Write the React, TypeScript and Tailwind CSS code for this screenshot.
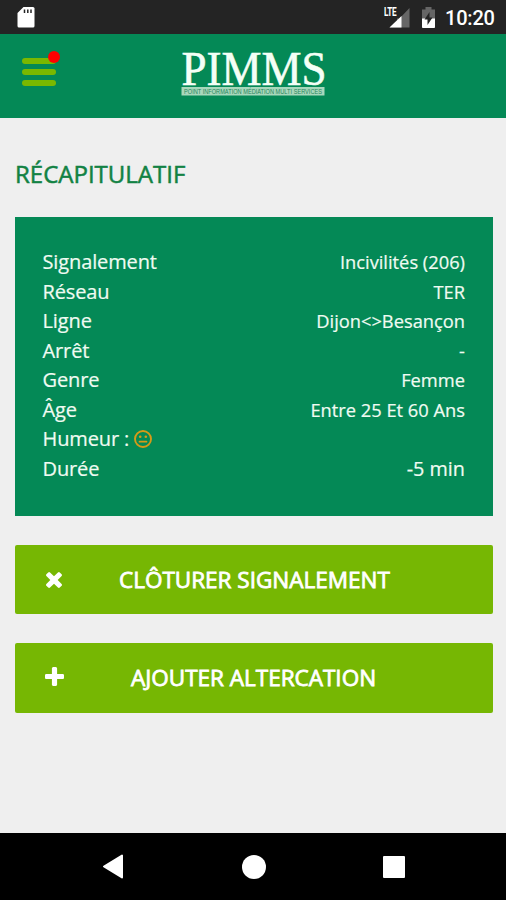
const rows = [
  { label: 'Signalement', value: 'Incivilités (206)' },
  { label: 'Réseau', value: 'TER' },
  { label: 'Ligne', value: 'Dijon<>Besançon' },
  { label: 'Arrêt', value: '-' },
  { label: 'Genre', value: 'Femme' },
  { label: 'Âge', value: 'Entre 25 Et 60 Ans' },
  { label: 'Humeur :', value: '', mood: true },
  { label: 'Durée', value: '-5 min', large: true },
];

function StatusBar() {
  return (
    <div className="flex h-[34px] items-start bg-[#242424] pr-[11px] pl-[17px] font-[Roboto,sans-serif] text-white">
      <svg className="mt-[7px] h-[21px] w-[18px]" viewBox="0 0 18 21">
        <path d="M6.500 0H16Q17.500 0 17.500 1.500V19Q17.500 20.500 16 20.500H2Q.5 20.500 .5 19V6Z" fill="#fff" />
        <path d="M7.500 2.500v3.500M10.800 2.500v3.500M14 2.500v3.500" stroke="#242424" strokeWidth="1.500" />
      </svg>
      <div className="ml-auto flex items-start">
        <span className="mt-[6px] -mr-[8px] block w-[13px] text-[12px] leading-[13px] font-bold tracking-[-0.4px]"><span className="block origin-left scale-x-[.68]">LTE</span></span>
        <svg className="mt-[8px] h-[20px] w-[21px]" viewBox="0 0 21 20">
          <path d="M20.500 0V19.500H.5L8 12.500V10.500H10.500Z" fill="#666" />
          <path d="M12.500 8V19.500H.5Z" fill="#fff" />
        </svg>
        <svg className="mt-[7px] ml-[12px] h-[21px] w-[13px]" viewBox="0 0 13 21">
          <path d="M3.500 0h6v2.500H13V20q0 1-1 1H1q-1 0-1-1V2.500h3.500Z" fill="#666" />
          <path d="M0 11.500h13V20q0 1-1 1H1q-1 0-1-1Z" fill="#fff" />
          <path d="M7.500 5 2.500 12.500h3V18L10.500 10.500h-3Z" fill="#242424" />
        </svg>
        <span className="ml-[10px] w-[50px] text-[20px] leading-[37px] font-medium tracking-[-0.2px]">10:20</span>
      </div>
    </div>
  );
}

function Header() {
  return (
    <header className="flex h-[84px] items-start bg-[#048956] pl-[21.5px]">
      <button aria-label="Menu" className="relative mt-[24px] flex w-[34px] flex-col gap-[5px]">
        <span className="h-[6px] rounded-full bg-[#7ab800]" />
        <span className="h-[6px] rounded-full bg-[#7ab800]" />
        <span className="h-[6px] rounded-full bg-[#7ab800]" />
        <span className="absolute -top-[7px] left-[26.5px] size-[12px] rounded-full bg-[#ff0000]" />
      </button>
      <svg className="ml-[114.5px] h-[84px] w-[168px]" viewBox="-10 -14 168 84">
        <text x="1.500" y="36.500" textLength="145" lengthAdjust="spacingAndGlyphs" fontFamily="'Liberation Serif', serif" fontSize="48" fill="#f4fff6" stroke="#f4fff6" strokeWidth=".6">PIMMS</text>
        <rect x="1.500" y="39" width="143" height="8.500" fill="#a8d8bc" />
        <text x="4" y="45.700" textLength="138" lengthAdjust="spacingAndGlyphs" fontFamily="'Liberation Sans', sans-serif" fontSize="6.500" fill="#26865b">POINT INFORMATION MÉDIATION MULTI SERVICES</text>
      </svg>
    </header>
  );
}

function MehIcon() {
  return (
    <svg className="ml-[5px] size-[18px]" viewBox="0 0 18 18" fill="none" stroke="#d69a18">
      <circle cx="9" cy="9" r="8" strokeWidth="1.900" />
      <path d="M5.500 11.700h7" strokeWidth="1.700" strokeLinecap="round" />
      <circle cx="6.200" cy="6.700" r="1.300" fill="#d69a18" stroke="none" />
      <circle cx="11.800" cy="6.700" r="1.300" fill="#d69a18" stroke="none" />
    </svg>
  );
}

const crossPath =
  'M1298 1322q0 40-28 68l-136 136q-28 28-68 28t-68-28l-294-294-294 294q-28 28-68 28t-68-28l-136-136q-28-28-28-68t28-68l294-294-294-294q-28-28-28-68t28-68l136-136q28-28 68-28t68 28l294 294 294-294q28-28 68-28t68 28l136 136q28 28 28 68t-28 68l-294 294 294 294q28 28 28 68z';
const plusPath =
  'M1408 800v192q0 40-28 68t-68 28H896v416q0 40-28 68t-68 28H608q-40 0-68-28t-28-68v-416H96q-40 0-68-28T0 992V800q0-40 28-68t68-28h416V288q0-40 28-68t68-28h192q40 0 68 28t28 68v416h416q40 0 68 28t28 68z';

export default function App() {
  return (
    <div className="flex h-[900px] w-[506px] flex-col overflow-hidden bg-[#efefef] font-['Open_Sans',sans-serif]">
      <StatusBar />
      <Header />
      <main className="flex-1 pr-[13px] pl-[15px]">
        <h1 className="mt-[40px] h-[32px] text-[24px] leading-[32px] whitespace-nowrap text-[#128243] [-webkit-text-stroke:0.5px_#128243]">RÉCAPITULATIF</h1>
        <section className="mt-[27px] h-[299px] bg-[#048956] px-[28px] pt-[30px] text-[#f0fbf2] [-webkit-text-stroke:0.2px_#f0fbf2]">
          {rows.map((row) => (
            <div key={row.label} className="flex h-[29.5px] items-center justify-between whitespace-nowrap">
              <span className="-ml-[0.5px] flex items-center text-[20px] leading-[29px] tracking-[-0.12px]">
                {row.label}
                {row.mood && <MehIcon />}
              </span>
              <span className={row.large ? 'text-[19.8px] leading-[29px]' : 'text-[18.3px] leading-[29px]'}>{row.value}</span>
            </div>
          ))}
        </section>
        <button className="mt-[29px] flex h-[69px] w-full items-center rounded-[2px] bg-[#76b703] pl-[31px] text-white">
          <svg className="size-[16px]" viewBox="110 366 1188 1188" fill="currentColor"><path d={crossPath} /></svg>
          <span className="ml-[57px] text-[22.5px] leading-[30px] whitespace-nowrap [-webkit-text-stroke:0.8px_#fff]">CLÔTURER SIGNALEMENT</span>
        </button>
        <button className="mt-[29px] flex h-[70px] w-full items-center rounded-[2px] bg-[#76b703] pl-[30px] text-white">
          <svg className="mb-[3px] size-[19px]" viewBox="0 192 1408 1408" fill="currentColor"><path d={plusPath} /></svg>
          <span className="ml-[67px] text-[22.5px] leading-[30px] whitespace-nowrap [-webkit-text-stroke:0.8px_#fff]">AJOUTER ALTERCATION</span>
        </button>
      </main>
      <nav className="flex h-[67px] items-center bg-black">
        <svg className="ml-[102px] h-[25px] w-[22px]" viewBox="0 0 22 25"><path d="M20 1.500V23.500L2 12.500Z" fill="#fff" stroke="#fff" strokeWidth="2" strokeLinejoin="round" /></svg>
        <span className="ml-[118px] size-[24px] rounded-full bg-white" />
        <span className="ml-[117px] size-[22px] rounded-[1px] bg-white" />
      </nav>
    </div>
  );
}
